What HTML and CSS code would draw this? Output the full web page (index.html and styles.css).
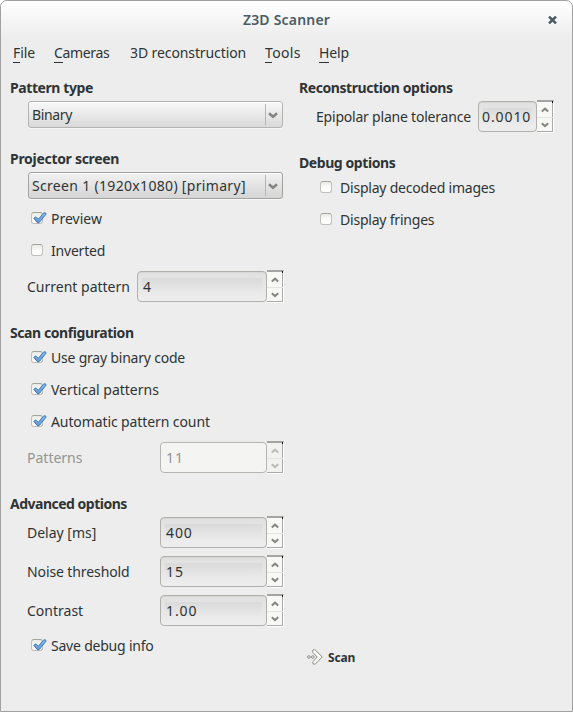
FILE: index.html
```html
<!DOCTYPE html>
<html lang="en">
<head>
<meta charset="utf-8">
<title>Z3D Scanner</title>
<link rel="stylesheet" href="styles.css">
</head>
<body>
<svg class="defs" width="0" height="0" aria-hidden="true">
  <defs>
    <linearGradient id="blue" x1="0" y1="0" x2="0" y2="1"><stop offset="0" stop-color="#8dbcec"/><stop offset="1" stop-color="#5a97d8"/></linearGradient>
    <symbol id="tick" viewBox="0 0 16 13"><path d="M2.8 6.2 L5 4.8 L7.4 7.2 L12.6 .9 Q14.8 .2 15.2 2 L8.2 10.6 Q7 11.4 6 10.4 Z" fill="url(#blue)" stroke="#3a70b0" stroke-width=".9" stroke-linejoin="round"/></symbol>
    <symbol id="down" viewBox="0 0 10 7"><path d="M1 1.2 L5 4.8 L9 1.2" fill="none" stroke="currentColor" stroke-width="2.5"/></symbol>
    <symbol id="up" viewBox="0 0 10 7"><path d="M1 5.5 L5 1.9 L9 5.5" fill="none" stroke="currentColor" stroke-width="2.5"/></symbol>
  </defs>
</svg>
<div class="window">
  <header class="titlebar">
    <h1 class="title">Z3D Scanner</h1>
    <svg class="close" viewBox="0 0 9 8"><path d="M1 .6 L8 7.4 M8 .6 L1 7.4" stroke="#4b5d64" stroke-width="2.5"/></svg>
  </header>
  <nav class="menubar">
    <span><u>F</u>ile</span><span class="tight"><u>C</u>ameras</span><span>3D reconstruction</span><span class="loose"><u>T</u>ools</span><span><u>H</u>elp</span>
  </nav>
  <main class="columns">
    <section class="left">
      <h2>Pattern type</h2>
      <div class="combo"><span class="value tight">Binary</span><span class="arrow"><svg><use href="#down"/></svg></span></div>
      <h2 class="wider">Projector screen</h2>
      <div class="combo focus"><span class="value loose">Screen 1 (1920x1080) [primary]</span><span class="arrow"><svg><use href="#down"/></svg></span></div>
      <div class="checks first">
        <label class="check"><span class="box"><svg><use href="#tick"/></svg></span><span class="plain">Preview</span></label>
        <label class="check"><span class="box"></span><span class="snug">Inverted</span></label>
      </div>
      <div class="field"><span class="plain">Current pattern</span><div class="spin wide"><span class="entry">4</span><span class="steps"><i><svg><use href="#up"/></svg></i><i><svg><use href="#down"/></svg></i></span></div></div>
      <h2>Scan configuration</h2>
      <div class="checks">
        <label class="check"><span class="box"><svg><use href="#tick"/></svg></span><span class="snug">Use gray binary code</span></label>
        <label class="check"><span class="box"><svg><use href="#tick"/></svg></span><span class="plain">Vertical patterns</span></label>
        <label class="check"><span class="box"><svg><use href="#tick"/></svg></span><span>Automatic pattern count</span></label>
      </div>
      <div class="field disabled"><span class="plain">Patterns</span><div class="spin"><span class="entry">11</span><span class="steps"><i><svg><use href="#up"/></svg></i><i><svg><use href="#down"/></svg></i></span></div></div>
      <h2 class="narrower">Advanced options</h2>
      <div class="stack">
        <div class="field"><span class="plain">Delay [ms]</span><div class="spin"><span class="entry">400</span><span class="steps"><i><svg><use href="#up"/></svg></i><i><svg><use href="#down"/></svg></i></span></div></div>
        <div class="field"><span>Noise threshold</span><div class="spin"><span class="entry">15</span><span class="steps"><i><svg><use href="#up"/></svg></i><i><svg><use href="#down"/></svg></i></span></div></div>
        <div class="field"><span class="plain">Contrast</span><div class="spin"><span class="entry">1.00</span><span class="steps"><i><svg><use href="#up"/></svg></i><i><svg><use href="#down"/></svg></i></span></div></div>
      </div>
      <div class="checks first">
        <label class="check"><span class="box"><svg><use href="#tick"/></svg></span><span class="snug">Save debug info</span></label>
      </div>
    </section>
    <section class="right">
      <h2>Reconstruction options</h2>
      <div class="field"><span class="snug">Epipolar plane tolerance</span><div class="spin narrow"><span class="entry">0.0010</span><span class="steps"><i><svg><use href="#up"/></svg></i><i><svg><use href="#down"/></svg></i></span></div></div>
      <h2>Debug options</h2>
      <div class="checks">
        <label class="check"><span class="box"></span><span class="snug">Display decoded images</span></label>
        <label class="check"><span class="box"></span><span class="snug">Display fringes</span></label>
      </div>
      <div class="scan">
        <svg viewBox="0 0 16 16"><g fill="#fafaf9" stroke="#888a85" stroke-width="1"><circle cx="1.9" cy="8" r="1.3"/><circle cx="5.8" cy="8" r="1.3"/><path d="M6.2 .8 Q7.5 .2 8.5 1.2 L15.2 8 L8.5 14.8 Q7.3 15.7 6 14.8 Q5.2 13.6 6.2 12.5 L10.2 8 L6 3.6 Q4.9 2.1 6.2 .8Z"/></g></svg>
        <span>Scan</span>
      </div>
    </section>
  </main>
</div>
</body>
</html>
```

FILE: styles.css
```css
* { box-sizing: border-box; }
body { margin: 0; background: #fff; font: 14px/20px "Noto Sans", "Open Sans", sans-serif; color: #2e3436; letter-spacing: -.1px; }
.plain { letter-spacing: 0; }
.snug { letter-spacing: -.21px; }
.tight { letter-spacing: -.35px; }
.loose { letter-spacing: .32px; }
.defs { display: block; }
.window { width: 573px; height: 712px; border: 1px solid #a1a1a1; border-radius: 7px 7px 0 0; background: linear-gradient(#fff, #ededed 36px); overflow: hidden; white-space: nowrap; }
.titlebar { height: 38px; display: grid; grid-template-columns: 1fr auto 1fr; align-items: center; }
.title { grid-column: 2; margin: 0; font-size: 14px; line-height: 20px; font-weight: 600; letter-spacing: .2px; color: #4b5d64; }
.close { width: 9px; height: 8px; justify-self: end; margin-right: 15px; }
.menubar { height: 29px; display: grid; grid-template-columns: 41px 76px 135px 54px auto; padding: 0 0 1px 12px; align-items: center; }
.menubar u { text-decoration: none; border-bottom: 1px solid #2e3436; }
.columns { display: grid; grid-template-columns: 273px auto; column-gap: 16px; padding: 10px 0 0 9px; }
h2 { margin: 21px 0 0; height: 20px; font-size: 14px; line-height: 20px; font-weight: 700; letter-spacing: -.42px; }
h2.wider { letter-spacing: -.3px; }
h2.narrower { letter-spacing: -.5px; }
h2:first-child { margin-top: 0; }
.left, .right { display: flex; flex-direction: column; }
.combo { height: 27px; margin: 3px 0 0 18px; border: 1px solid #b3b3b1; border-radius: 3px; display: flex; align-items: center; background: linear-gradient(#f9f9f9, #d9d9d9); box-shadow: 0 1px #f7f7f7, inset 0 1px #fff; }
.combo.focus { border-color: #a2a29f; background: linear-gradient(#f2f2f2, #d5d5d5); }
.value { flex: 1; padding: 0 0 0 3px; }
.arrow { width: 17px; height: 21px; border-left: 1px solid #b5b5b3; display: flex; align-items: center; padding: 1px 0 0 2px; color: #858581; }
.arrow svg, .steps svg { display: block; height: 7px; }
.arrow svg { width: 10px; }
.steps svg { width: 8px; height: 6px; }
.checks { margin-top: -1px; padding-left: 21px; }
.checks.first { margin-top: 4px; }
.check { height: 32px; display: flex; align-items: center; gap: 8px; }
.box { width: 12px; height: 12px; position: relative; top: -1px; border: 1px solid #c0c0ba; border-top-color: #a3a59c; border-radius: 3px; background: linear-gradient(#e9e9e6, #fff 65%); }
.box svg { position: absolute; left: -1px; top: -1px; width: 16px; height: 13px; overflow: visible; }
.field { height: 31px; margin-top: 4px; padding-left: 17px; display: flex; align-items: center; justify-content: space-between; }
.field > span { padding-top: 1px; }
h2 + .field, h2 + .stack { margin-top: 3px; }
.stack { display: grid; gap: 8px; }
.stack .field { margin: 0; }
.spin { width: 124px; height: 31px; display: flex; margin-right: -1px; }
.spin.wide { width: 147px; }
.spin.narrow { width: 76px; margin-right: 18px; }
.entry { flex: 1; border: 1px solid #b0b0ad; border-radius: 4px; padding: 5px 0 0 5px; line-height: 20px; letter-spacing: .9px; background: linear-gradient(#dadada, #ebebeb) 4px 6px / calc(100% - 8px) 16px no-repeat, linear-gradient(#e0e0e0, #eeeeee); box-shadow: inset 0 1px #d6d6d5; }
.narrow .entry { padding-left: 3px; }
.steps { width: 17px; height: 33px; margin-top: -1px; border: solid; border-width: 2px 1px 1px 0; border-color: #a4a4a2 #fff #fff; background: #f8f8f7; box-shadow: inset -1px 0 #aaa, inset 0 -1px #aaa; display: grid; grid-template-rows: 1fr 1fr; position: relative; }
.steps::after { content: ""; position: absolute; width: 1px; height: 2px; right: 0; top: -1px; background: #111; }
.steps i { display: flex; align-items: center; justify-content: center; color: #858581; }
.steps i + i { border-top: 1px solid #e4e4e3; }
.disabled { color: #929593; }
.disabled .entry { background: #f4f4f2; box-shadow: none; border-color: #b5b5b2; }
.disabled .steps { background: #f2f2f0; }
.disabled i { color: #bbbcb9; }
.right { height: 600px; }
.scan { margin: auto 0 10px 8px; display: flex; align-items: center; gap: 5px; font-size: 12px; font-weight: 700; letter-spacing: -.2px; }
.scan svg { width: 16px; height: 16px; position: relative; top: -1px; }
```
